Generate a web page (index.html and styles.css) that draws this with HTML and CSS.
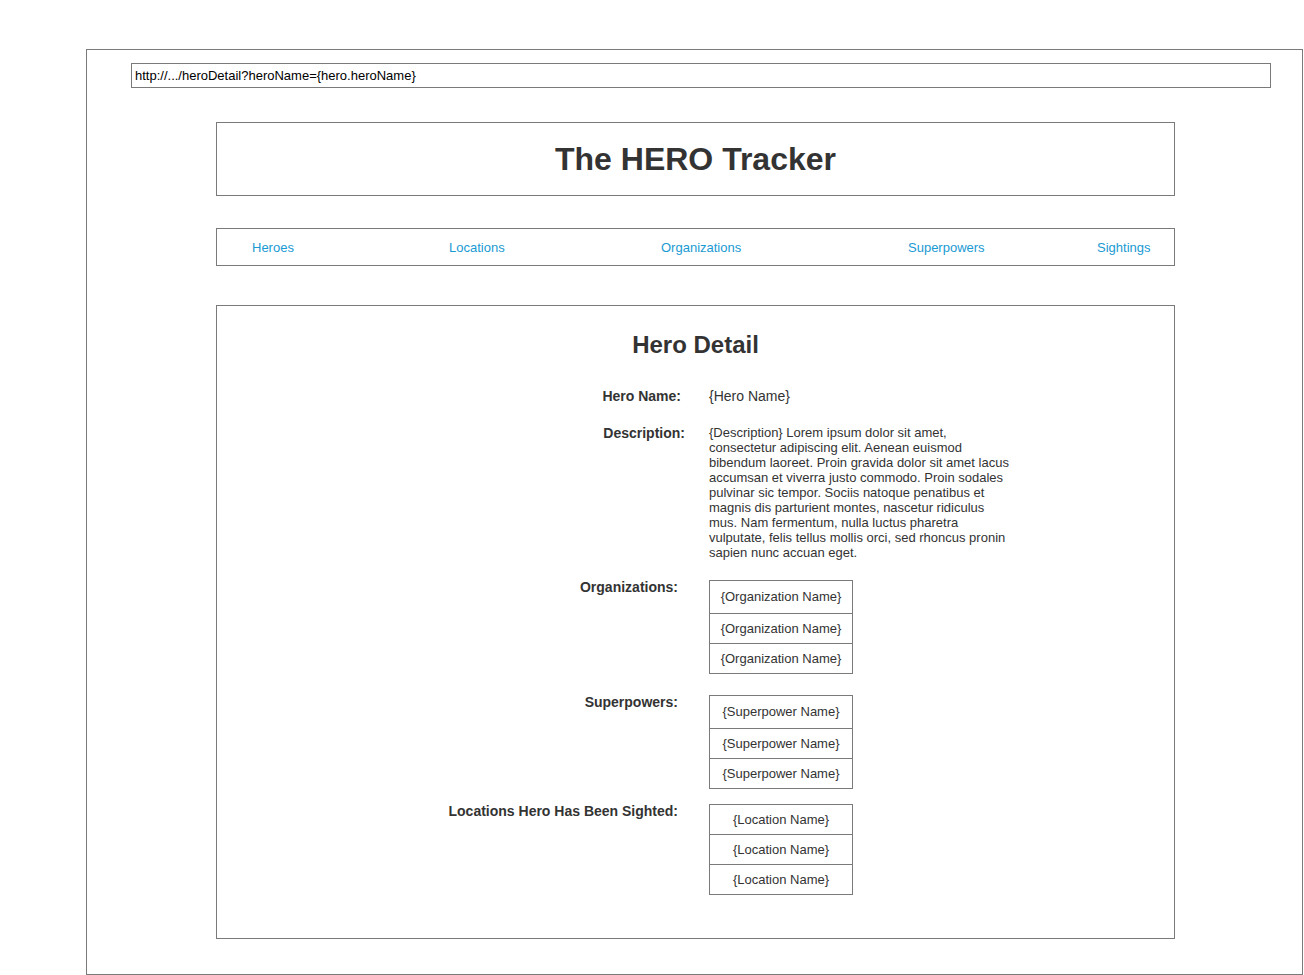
FILE: index.html
```html
<!DOCTYPE html>
<html lang="en">
<head>
<meta charset="utf-8">
<title>Hero Detail</title>
<link rel="stylesheet" href="styles.css">
</head>
<body>
<div class="frame">
  <div class="url">http://.../heroDetail?heroName={hero.heroName}</div>
  <div class="column">
    <header class="title-box"><h1 class="title">The HERO Tracker</h1></header>
    <nav class="nav">
      <a class="nav-link" href="#">Heroes</a>
      <a class="nav-link" href="#">Locations</a>
      <a class="nav-link" href="#">Organizations</a>
      <a class="nav-link" href="#">Superpowers</a>
      <a class="nav-link" href="#">Sightings</a>
    </nav>
    <main class="main">
      <h2 class="heading">Hero Detail</h2>
      <div class="field">
        <div class="label">Hero Name:</div>
        <div class="value value--name">{Hero Name}</div>
      </div>
      <div class="field field--desc">
        <div class="label label--desc">Description:</div>
        <div class="value value--desc">{Description} Lorem ipsum dolor sit amet, consectetur adipiscing elit. Aenean euismod bibendum laoreet. Proin gravida dolor sit amet lacus accumsan et viverra justo commodo. Proin sodales pulvinar sic tempor. Sociis natoque penatibus et magnis dis parturient montes, nascetur ridiculus mus. Nam fermentum, nulla luctus pharetra vulputate, felis tellus mollis orci, sed rhoncus pronin sapien nunc accuan eget.</div>
      </div>
      <div class="field field--org">
        <div class="label label--list">Organizations:</div>
        <ul class="list list--tall">
          <li class="item">{Organization Name}</li>
          <li class="item">{Organization Name}</li>
          <li class="item">{Organization Name}</li>
        </ul>
      </div>
      <div class="field field--power">
        <div class="label label--list">Superpowers:</div>
        <ul class="list list--tall">
          <li class="item">{Superpower Name}</li>
          <li class="item">{Superpower Name}</li>
          <li class="item">{Superpower Name}</li>
        </ul>
      </div>
      <div class="field field--loc">
        <div class="label label--list">Locations Hero Has Been Sighted:</div>
        <ul class="list">
          <li class="item">{Location Name}</li>
          <li class="item">{Location Name}</li>
          <li class="item">{Location Name}</li>
        </ul>
      </div>
    </main>
  </div>
</div>
</body>
</html>
```
FILE: styles.css
```css
* { box-sizing: border-box; }
html, body { margin: 0; padding: 0; background: #fff; }
body {
  font-family: "Liberation Sans", Arial, sans-serif;
  color: #333;
}
.frame {
  margin: 49px 0 0 86px;
  width: 1217px;
  height: 926px;
  border: 1px solid #7a7a7a;
  padding: 13px 0 0 44px;
}
.url {
  width: 1140px;
  height: 25px;
  border: 1px solid #7a7a7a;
  font-size: 13px;
  line-height: 23px;
  padding-left: 3px;
  color: #000;
}
.column {
  margin-left: 85px;
  width: 959px;
}
.title-box {
  margin-top: 34px;
  height: 74px;
  border: 1px solid #7a7a7a;
  display: flex;
  align-items: center;
  justify-content: center;
}
.title {
  margin: 0;
  font-size: 32px;
  line-height: 36px;
  font-weight: bold;
  color: #333;
}
.nav {
  margin-top: 32px;
  height: 38px;
  border: 1px solid #7a7a7a;
  display: grid;
  grid-template-columns: 197px 212px 247px 189px auto;
  align-items: center;
  padding: 1px 0 0 35px;
}
.nav-link {
  font-size: 13px;
  line-height: 16px;
  color: #1a9ad3;
  text-decoration: none;
}
.main {
  margin-top: 39px;
  height: 634px;
  border: 1px solid #7a7a7a;
  padding-top: 25px;
}
.heading {
  margin: 0 0 29px;
  text-align: center;
  font-size: 24px;
  line-height: 28px;
  font-weight: bold;
  color: #333;
}
.field {
  display: grid;
  grid-template-columns: 464px 1fr;
  column-gap: 28px;
  align-items: start;
}
.field--desc { margin-top: 21px; }
.field--org { margin-top: 19px; }
.field--power { margin-top: 20px; }
.field--loc { margin-top: 14px; }
.label {
  text-align: right;
  font-size: 14px;
  line-height: 16px;
  font-weight: bold;
  color: #333;
}
.label--desc { margin-right: -4px; }
.label--list { margin-right: 3px; }
.value {
  color: #333;
}
.value--name {
  font-size: 14px;
  line-height: 16px;
}
.value--desc {
  font-size: 13px;
  line-height: 15px;
  width: 304px;
}
.list {
  list-style: none;
  margin: 1px 0 0;
  padding: 0;
  width: 144px;
  border: 1px solid #7a7a7a;
}
.item {
  height: 30px;
  border-top: 1px solid #7a7a7a;
  font-size: 13px;
  line-height: 29px;
  text-align: center;
  color: #333;
}
.item:first-child {
  border-top: none;
  height: 29px;
}
.list--tall .item:first-child {
  height: 32px;
  line-height: 32px;
}
```
